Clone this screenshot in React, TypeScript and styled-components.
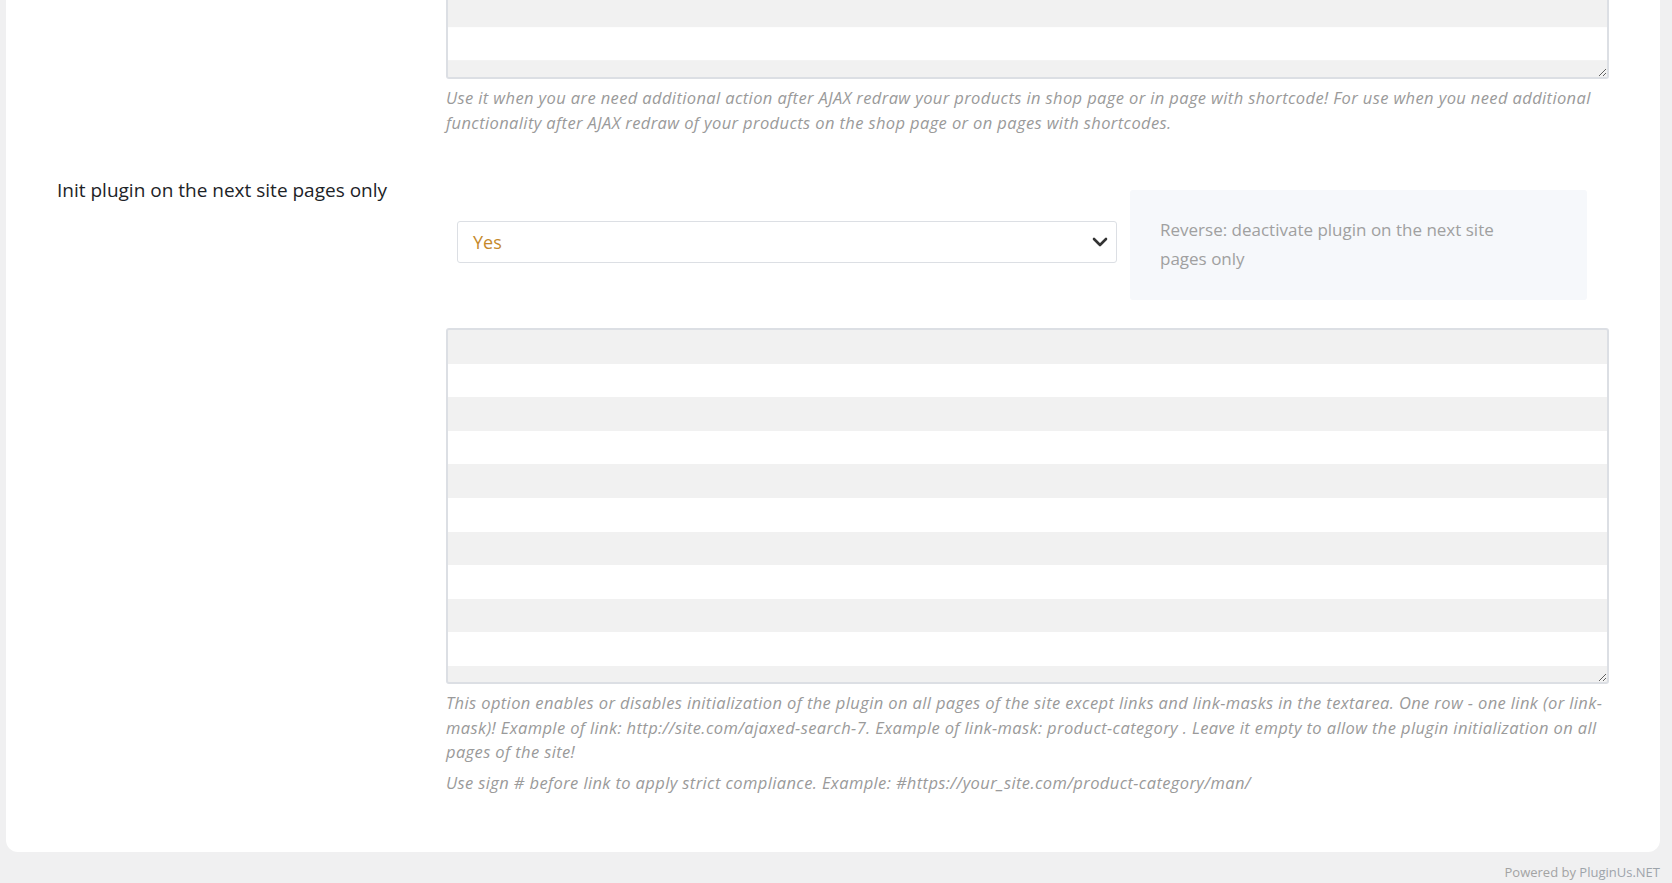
import React from 'react';
import styled, { createGlobalStyle } from 'styled-components';

const GlobalStyle = createGlobalStyle`
  html, body {
    margin: 0;
    padding: 0;
    overflow: hidden;
    background-color: #f0f0f1;
  }
  body {
    font-family: 'Open Sans', 'Noto Sans', sans-serif;
  }
`;

const STRIPE = 33.6;

const App = () => {
  return (
    <>
      <GlobalStyle />
      <Page>
        <Card>
          <OptionRow>
            <OptionLabel />
            <OptionBody>
              <LinedTextarea $cropped readOnly />
              <Hint>
                Use it when you are need additional action after AJAX redraw
                your products in shop page or in page with shortcode! For use
                when you need additional functionality after AJAX redraw of your
                products on the shop page or on pages with shortcodes.
              </Hint>
            </OptionBody>
          </OptionRow>

          <OptionRow $spaced>
            <OptionLabel>Init plugin on the next site pages only</OptionLabel>
            <OptionBody $offset>
              <SelectRow>
                <SelectBox>
                  <SelectValue>Yes</SelectValue>
                  <svg width="16" height="10" viewBox="0 0 16 10">
                    <path
                      d="M2 2l6 6 6-6"
                      fill="none"
                      stroke="#333"
                      strokeWidth="2.6"
                      strokeLinecap="round"
                      strokeLinejoin="round"
                    />
                  </svg>
                </SelectBox>
                <Note>Reverse: deactivate plugin on the next site pages only</Note>
              </SelectRow>
              <LinedTextarea readOnly />
              <Hint>
                This option enables or disables initialization of the plugin on
                all pages of the site except links and link-masks in the
                textarea. One row - one link (or link-mask)! Example of link:
                http://site.com/ajaxed-search-7. Example of link-mask:
                product-category . Leave it empty to allow the plugin
                initialization on all pages of the site!
              </Hint>
              <Hint $gap>
                Use sign # before link to apply strict compliance. Example:
                #https://your_site.com/product-category/man/
              </Hint>
            </OptionBody>
          </OptionRow>
        </Card>
        <Footer>
          Powered by <FooterLink>PluginUs.NET</FooterLink>
        </Footer>
      </Page>
    </>
  );
};

const Page = styled.div`
  display: flex;
  flex-direction: column;
  padding: 0 12px 0 6px;
  height: 883px;
  box-sizing: border-box;
`;

const Card = styled.div`
  background-color: #fff;
  border-radius: 0 0 12px 12px;
  padding: 0 51px 57px 51px;
`;

const OptionRow = styled.div<{ $spaced?: boolean }>`
  display: grid;
  grid-template-columns: 389px 1fr;
  margin-top: ${props => (props.$spaced ? '42px' : '0')};
`;

const OptionLabel = styled.div`
  font-size: 19px;
  line-height: 26px;
  color: #1d2327;
`;

const OptionBody = styled.div<{ $offset?: boolean }>`
  display: flex;
  flex-direction: column;
  padding-top: ${props => (props.$offset ? '13px' : '0')};
`;

const LinedTextarea = styled.textarea<{ $cropped?: boolean }>`
  display: block;
  width: 100%;
  box-sizing: border-box;
  height: ${props => (props.$cropped ? '79px' : '356px')};
  border: 2px solid #dcdfe4;
  border-top-width: ${props => (props.$cropped ? '0' : '2px')};
  border-radius: ${props => (props.$cropped ? '0 0 3px 3px' : '3px')};
  background: repeating-linear-gradient(
    to bottom,
    #f1f1f1 0,
    #f1f1f1 ${STRIPE}px,
    #fff ${STRIPE}px,
    #fff ${STRIPE * 2}px
  );
  background-position: 0 ${props => (props.$cropped ? '-6.9px' : '0')};
  resize: vertical;
  outline: none;
  margin: 0;
  padding: 0;
`;

const Hint = styled.p<{ $gap?: boolean }>`
  margin: ${props => (props.$gap ? '6px 0 0' : '7px 0 0')};
  font-size: 16.5px;
  letter-spacing: 0.38px;
  line-height: 24.5px;
  font-style: italic;
  color: #9a9a9a;
`;

const SelectRow = styled.div`
  display: flex;
  align-items: flex-start;
  gap: 13px;
  padding: 0 22px 0 11px;
  margin-bottom: 28px;
`;

const SelectBox = styled.div`
  flex: 1;
  display: flex;
  align-items: center;
  justify-content: space-between;
  height: 42px;
  margin-top: 31px;
  box-sizing: border-box;
  padding: 0 8px 0 15px;
  border: 1px solid #dcdfe4;
  border-radius: 3px;
  background-color: #fff;
`;

const SelectValue = styled.span`
  font-size: 18px;
  color: #c5892b;
`;

const Note = styled.div`
  width: 457px;
  box-sizing: border-box;
  padding: 26px 60px 27px 30px;
  background-color: #f6f8fb;
  border-radius: 3px;
  font-size: 17px;
  line-height: 28.5px;
  color: #a0a0a0;
`;

const Footer = styled.div`
  margin-top: 11px;
  text-align: right;
  font-size: 13px;
  line-height: 18px;
  color: #a3a3a3;
`;

const FooterLink = styled.span`
  color: #9ea4ab;
`;

export default App;
